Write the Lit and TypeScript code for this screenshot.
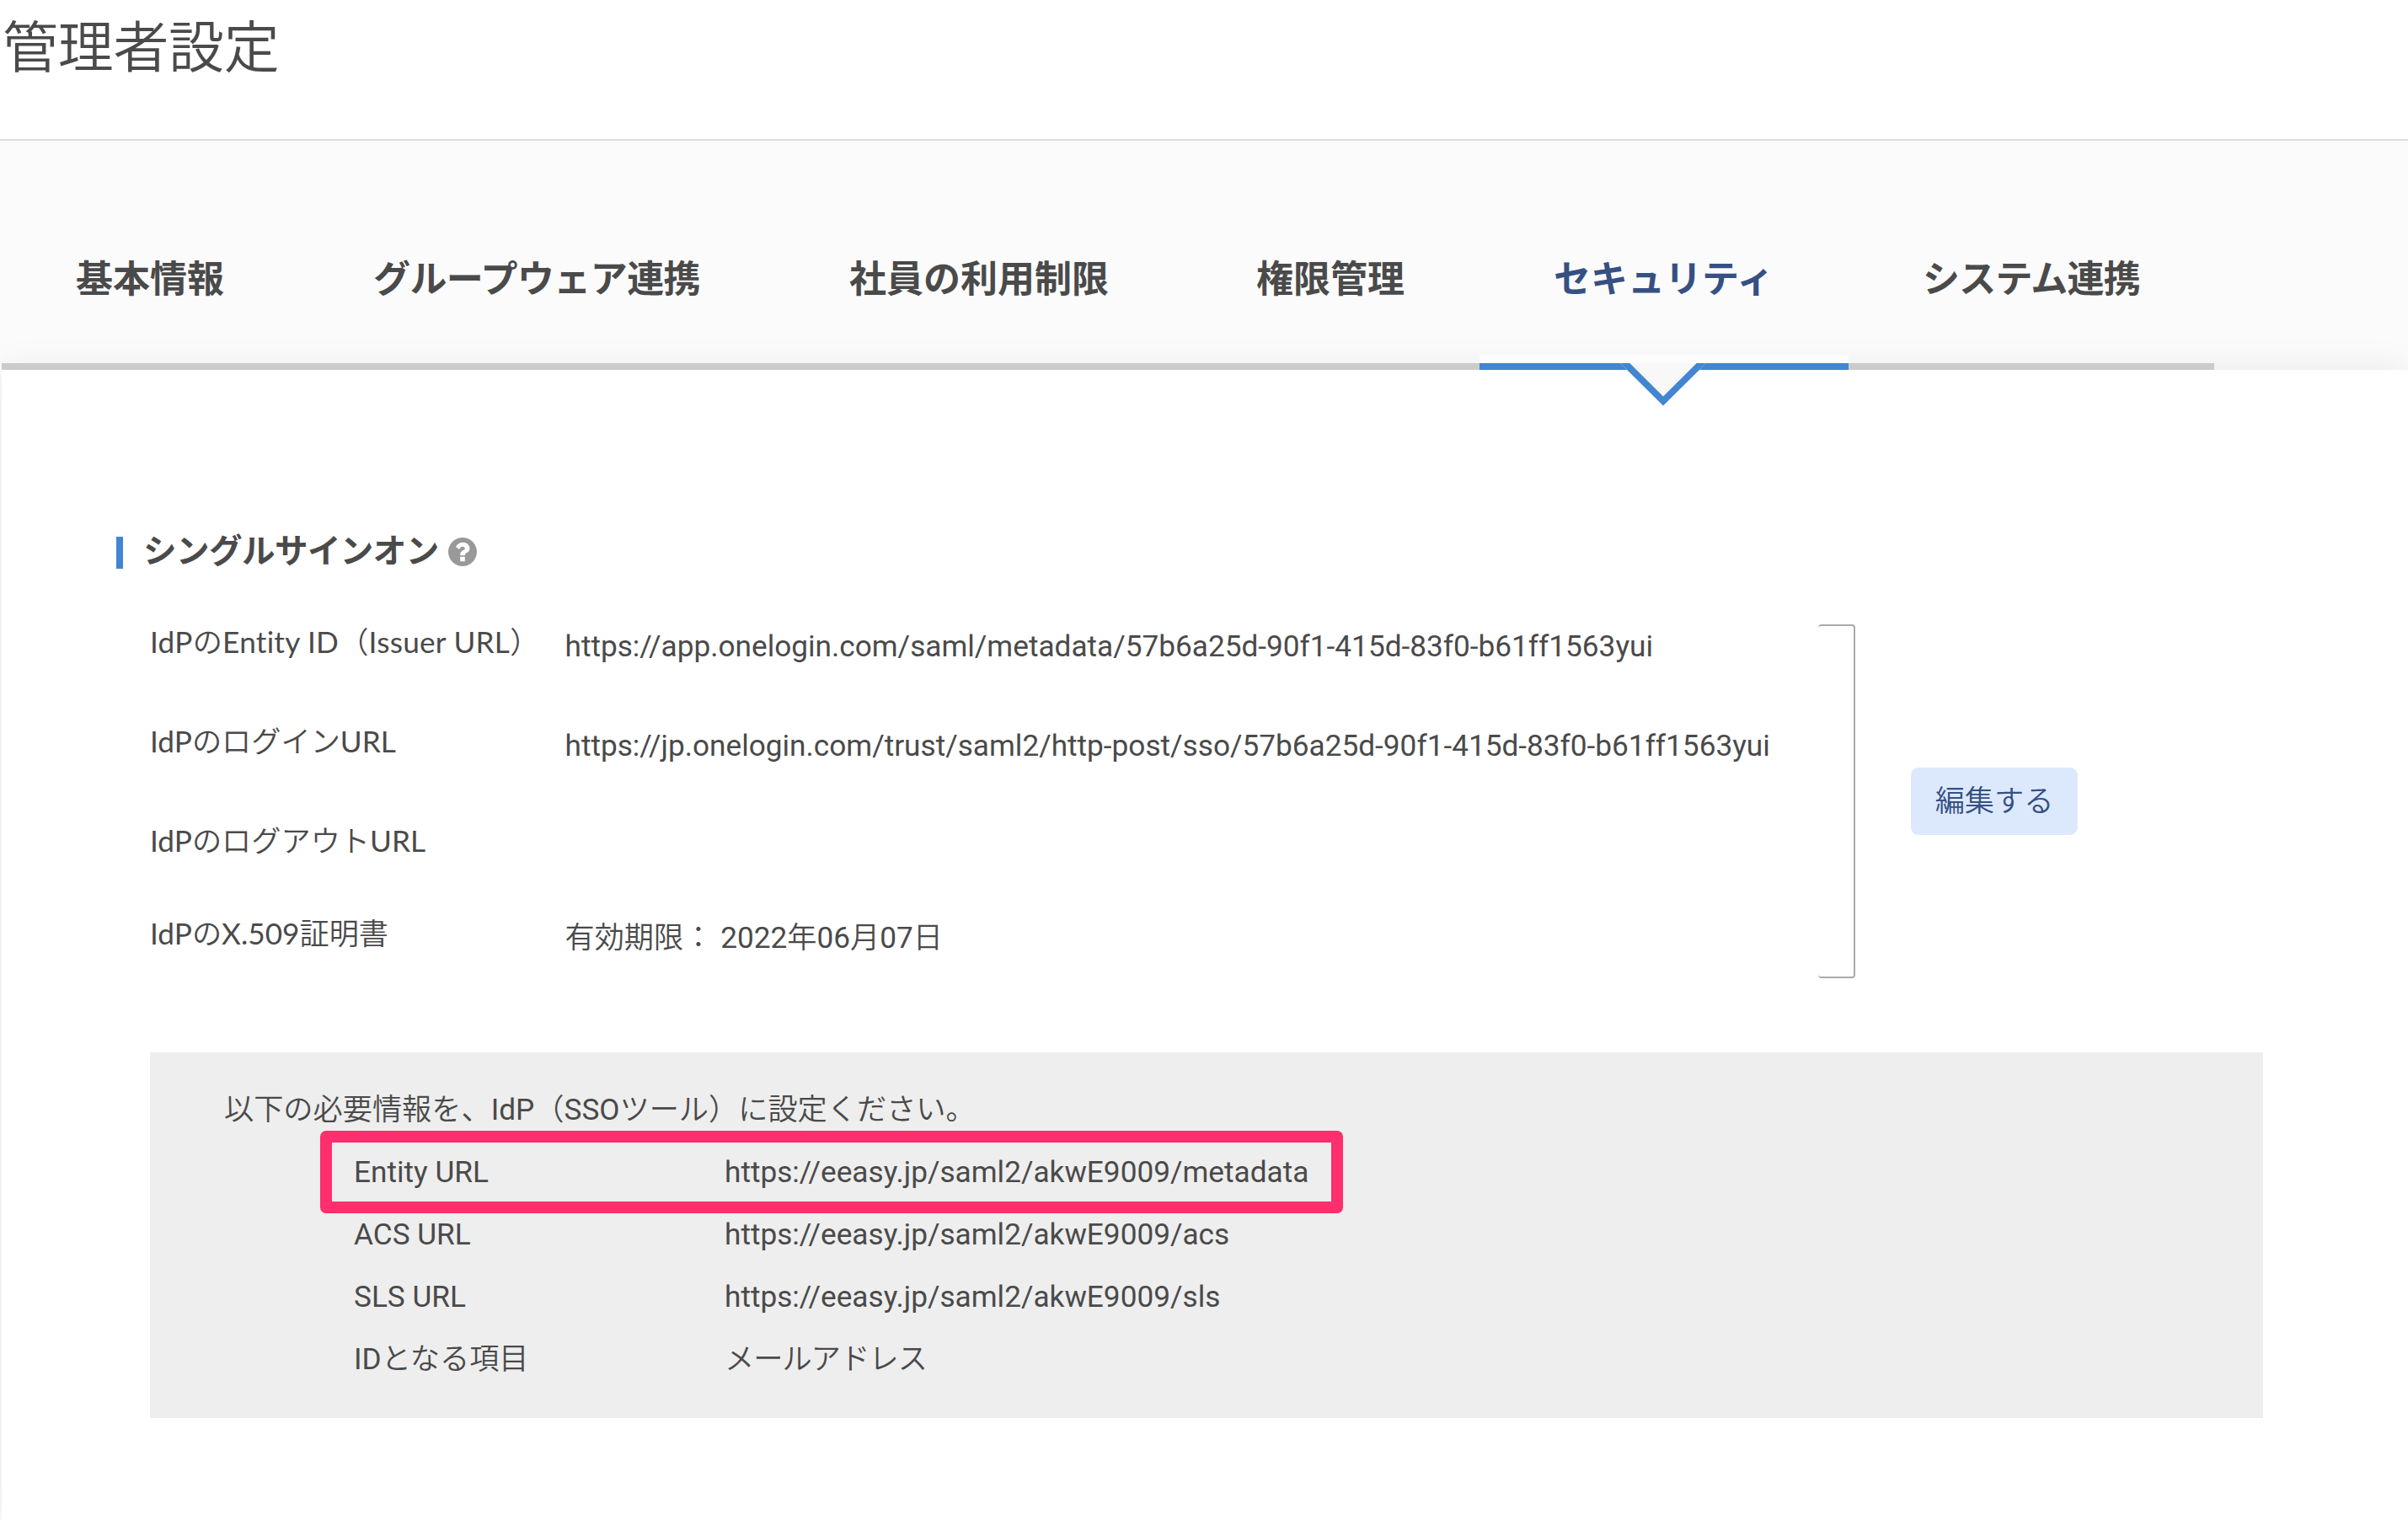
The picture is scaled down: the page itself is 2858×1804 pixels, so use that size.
import { LitElement, html, css, svg, nothing } from "lit";
import { customElement, state } from "lit/decorators.js";
import { classMap } from "lit/directives/class-map.js";

interface Tab {
  id: string;
  label: string;
}

interface Field {
  label: string;
  value: string;
  highlighted?: boolean;
}

const TABS: Tab[] = [
  { id: "basic", label: "基本情報" },
  { id: "groupware", label: "グループウェア連携" },
  { id: "limits", label: "社員の利用制限" },
  { id: "permissions", label: "権限管理" },
  { id: "security", label: "セキュリティ" },
  { id: "systems", label: "システム連携" },
];

const IDP_FIELDS: Field[] = [
  {
    label: "IdPのEntity ID（Issuer URL）",
    value: "https://app.onelogin.com/saml/metadata/57b6a25d-90f1-415d-83f0-b61ff1563yui",
  },
  {
    label: "IdPのログインURL",
    value: "https://jp.onelogin.com/trust/saml2/http-post/sso/57b6a25d-90f1-415d-83f0-b61ff1563yui",
  },
  { label: "IdPのログアウトURL", value: "" },
  { label: "IdPのX.509証明書", value: "有効期限： 2022年06月07日" },
];

const SP_FIELDS: Field[] = [
  { label: "Entity URL", value: "https://eeasy.jp/saml2/akwE9009/metadata", highlighted: true },
  { label: "ACS URL", value: "https://eeasy.jp/saml2/akwE9009/acs" },
  { label: "SLS URL", value: "https://eeasy.jp/saml2/akwE9009/sls" },
  { label: "IDとなる項目", value: "メールアドレス" },
];

const helpIcon = svg`<path d="M896 1248v-192q0-14-9-23t-23-9h-192q-14 0-23 9t-9 23v192q0 14 9 23t23 9h192q14 0 23-9t9-23zM1152 576q0-88-55.5-163t-138.5-116-170-41q-243 0-371 213-15 24 8 42l132 100q7 6 19 6 16 0 25-12 53-68 86-92 34-24 86-24 48 0 85.5 26t37.5 59q0 38-20 61t-68 45q-63 28-115.5 86.5t-52.5 125.5v36q0 14 9 23t23 9h192q14 0 23-9t9-23q0-19 21.5-49.5t54.5-49.5q32-18 49-28.5t46-35 44.5-48 28-60.5 12.5-81zM1536 768q0 209-103 385.5t-279.5 279.5-385.5 103-385.5-103-279.5-279.5-103-385.5 103-385.5 279.5-279.5 385.5-103 385.5 103 279.5 279.5 103 385.5z"/>`;

/** Japanese runs are set one step lighter than the Latin text around them. */
const mixed = (text: string) =>
  text
    .split(/([\u3000-\u9fff\uff00-\uffef]+)/)
    .filter((run) => run)
    .map((run) => (/^[\u3000-\uffef]/.test(run) ? html`<span class="jp">${run}</span>` : run));

@customElement("app-root")
export class AppRoot extends LitElement {
  @state() private activeTab = "security";

  static styles = css`
    :host {
      display: flex;
      flex-direction: column;
      box-sizing: border-box;
      width: 100%;
      height: 100vh;
      overflow: hidden;
      background: #fff;
      color: #4a4a4a;
      font-family: Roboto, "Noto Sans CJK JP", sans-serif;
      font-size: 35.2px;
      font-weight: 400;
      line-height: 40px;
      font-variant-ligatures: none;
    }
    * {
      box-sizing: border-box;
    }
    .header {
      flex: none;
      height: 167px;
      padding: 18px 0 0 3px;
      border-bottom: 2px solid #ddd;
    }
    .title {
      margin: 0;
      font: 350 66px/66px "Noto Sans CJK JP", sans-serif;
      letter-spacing: -0.3px;
    }
    .main {
      flex: 1;
      display: flex;
      flex-direction: column;
      min-height: 0;
      background: #fbfbfb;
    }
    .tabs {
      position: relative;
      z-index: 1;
      flex: none;
      display: grid;
      grid-template-columns: 353px 565px 483px 353px 438px 434px;
      height: 272px;
      padding-left: 2px;
    }
    .tab {
      position: relative;
      display: block;
      padding: 139px 0 81px 88px;
      border: 0;
      border-bottom: 8px solid #cbcbcb;
      background: none;
      color: inherit;
      font: 700 44px/44px "Noto Sans CJK JP", sans-serif;
      text-align: left;
      white-space: nowrap;
    }
    .tab:nth-child(2) {
      letter-spacing: -0.6px;
    }
    .tab:nth-child(6) {
      letter-spacing: -0.8px;
    }
    .tab.active {
      border-bottom-color: #4285d3;
      color: #365083;
      background: linear-gradient(#fcfcfc, #fcfcfc) bottom / 100% 10px no-repeat;
    }
    .pointer {
      position: absolute;
      left: 50%;
      top: 100%;
      margin-left: -52px;
      width: 102px;
      height: 51px;
      display: block;
    }
    .panel {
      flex: 1;
      min-height: 0;
      margin-left: 2px;
      padding: 198px 0 0 136px;
      background: #fff;
      box-shadow: 0 0 40px rgba(0, 0, 0, 0.08);
    }
    .heading {
      display: flex;
      align-items: flex-start;
      height: 38px;
      margin: 0;
      padding-left: 24px;
      border-left: 8px solid #4285d3;
      font: 700 39.6px/28px "Noto Sans CJK JP", sans-serif;
      letter-spacing: -0.6px;
    }
    .help {
      flex: none;
      width: 34px;
      height: 34px;
      margin: 1px 0 0 11px;
      fill: #999;
    }
    .settings {
      display: flex;
      align-items: center;
      margin: 66px 0 0 40px;
    }
    .fields {
      width: 1980px;
      height: 420px;
      display: grid;
      grid-template-rows: 118px 118px 110px 74px;
    }
    .field {
      display: grid;
      grid-template-columns: 492.5px 1fr;
      white-space: nowrap;
    }
    .field-label {
      font-family: Lato, "Noto Sans CJK JP", sans-serif;
    }
    .field:first-child .field-label {
      letter-spacing: 0.25px;
    }
    .field-value {
      padding-top: 6px;
    }
    .bracket {
      width: 44px;
      height: 420px;
      border: 2px solid #aaa;
      border-left: 0;
      border-radius: 4px;
    }
    .edit {
      width: 198px;
      height: 80px;
      margin-left: 66px;
      padding: 0 0 6px;
      border: 0;
      border-radius: 9px;
      background: #dce9fd;
      color: #365083;
      font: 350 35.2px/74px "Noto Sans CJK JP", sans-serif;
      text-align: center;
    }
    .notice {
      width: 2508px;
      height: 434px;
      margin: 88px 0 0 40px;
      padding: 48px 0 0 88px;
      background: #eee;
    }
    .lead {
      margin: 0 0 17px;
      white-space: nowrap;
    }
    .sp-row {
      position: relative;
      display: grid;
      grid-template-columns: 440px 1fr;
      margin-left: 154px;
      line-height: 74px;
      height: 74px;
    }
    .sp-row:last-child .sp-value {
      letter-spacing: -0.9px;
    }
    .frame {
      position: absolute;
      left: -40px;
      top: -12px;
      width: 1214px;
      height: 98px;
      border: 14px solid #ff2e6c;
      border-radius: 7px;
    }
    .jp {
      font-weight: 350;
      font-family: "Noto Sans CJK JP", sans-serif;
      line-height: 0;
    }
  `;

  private renderTab(tab: Tab) {
    const active = tab.id === this.activeTab;
    return html`<button
      class=${classMap({ tab: true, active })}
      @click=${() => (this.activeTab = tab.id)}
    >${tab.label}${active
        ? html`<svg class="pointer" viewBox="0 0 102 51">
            <path d="M0 0H102L51 50.5Z" fill="#4285d3" />
            <path d="M11.3 0H90.7L51 39.5Z" fill="#f8f8f8" />
            <path d="M0.3 0l8 8M101.7 0l-8 8" stroke="#fff" stroke-opacity="0.3" stroke-width="0.8" />
          </svg>`
        : nothing}</button>`;
  }

  render() {
    return html`
      <header class="header"><h1 class="title">管理者設定</h1></header>
      <div class="main">
        <nav class="tabs">${TABS.map((t) => this.renderTab(t))}</nav>
        <section class="panel">
          <h2 class="heading">
            <span>シングルサインオン</span>
            <svg class="help" viewBox="0 0 1536 1536">${helpIcon}</svg>
          </h2>
          <div class="settings">
            <div class="fields">
              ${IDP_FIELDS.map(
                (f) => html`<div class="field">
                  <div class="field-label">${mixed(f.label)}</div>
                  <div class="field-value">${mixed(f.value)}</div>
                </div>`
              )}
            </div>
            <div class="bracket"></div>
            <button class="edit">編集する</button>
          </div>
          <div class="notice">
            <p class="lead">${mixed("以下の必要情報を、IdP（SSOツール）に設定ください。")}</p>
            ${SP_FIELDS.map(
              (f) => html`<div class="sp-row">
                <span>${mixed(f.label)}</span>
                <span class="sp-value">${mixed(f.value)}</span>
                ${f.highlighted ? html`<div class="frame"></div>` : nothing}
              </div>`
            )}
          </div>
        </section>
      </div>
    `;
  }
}
